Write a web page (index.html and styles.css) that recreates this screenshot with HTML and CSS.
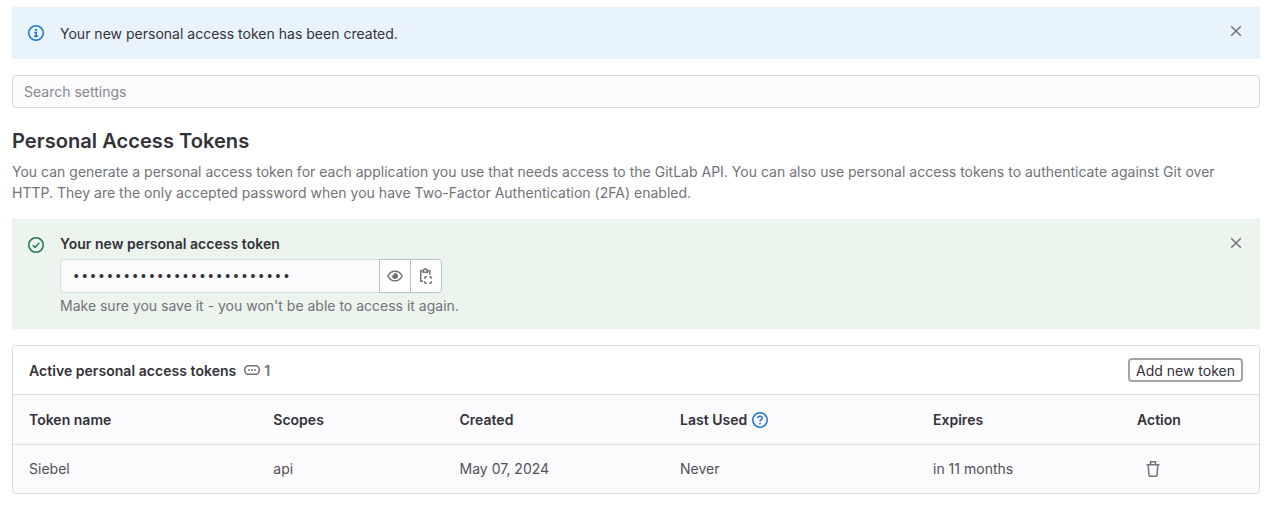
FILE: index.html
```html
<!DOCTYPE html>
<html lang="en">
<head>
<meta charset="utf-8">
<title>Personal Access Tokens</title>
<link rel="stylesheet" href="styles.css">
</head>
<body>
<main class="page">
  <div class="alert alert-info">
    <svg class="icon alert-icon" viewBox="0 0 16 16"><circle cx="8" cy="8" r="7.25"/><path d="M6.2 7.5H8.2V11M6 11.25H10"/><circle class="solid" cx="8" cy="4.9" r="1.1"/></svg>
    <p class="alert-text">Your new personal access token has been created.</p>
    <svg class="icon close" viewBox="0 0 16 16"><path d="M3.2 3.2l9.6 9.6M12.8 3.2l-9.6 9.6"/></svg>
  </div>

  <input class="search" type="text" placeholder="Search settings">

  <h1 class="title">Personal Access Tokens</h1>
  <p class="description">You can generate a personal access token for each application you use that needs access to the GitLab API. You can also use personal access tokens to authenticate against Git over HTTP. They are the only accepted password when you have Two-Factor Authentication (2FA) enabled.</p>

  <div class="alert alert-success">
    <svg class="icon alert-icon" viewBox="0 0 16 16"><circle cx="8" cy="8" r="7.25"/><path d="M4.8 8.3l2.2 2.1 4.2-4.4"/></svg>
    <div class="alert-body">
      <label class="token-label">Your new personal access token</label>
      <div class="token-group">
        <div class="token-value">••••••••••••••••••••••••••</div>
        <button class="token-button" aria-label="Reveal"><svg class="icon" viewBox="0 0 16 16"><path d="M.8 8C2.3 5 4.9 3.15 8 3.15S13.7 5 15.2 8C13.7 11 11.1 12.85 8 12.85S2.300 11 .8 8z"/><path class="solid" d="M8 5a3 3 0 1 1-3 3c0-.2 0-.4.1-.6Q7.3 7.4 7.4 5.1z"/></svg></button>
        <button class="token-button" aria-label="Copy"><svg class="icon" viewBox="0 0 16 16"><path d="M4.5 2.75H2.75v10.5H5M10 2.75h1.75V6.500"/><path d="M5.25 4.25V2L7.250.8l2 1.200v2.250z"/><path d="M6.750 10.800V9.750a1 1 0 0 1 1-1h1.050M11.200 8.750h1.050a1 1 0 0 1 1 1v1.050M13.250 13.200v1.050a1 1 0 0 1-1 1h-1.050M8.800 15.250H7.750a1 1 0 0 1-1-1V13.200"/></svg></button>
      </div>
      <p class="hint">Make sure you save it - you won't be able to access it again.</p>
    </div>
    <svg class="icon close" viewBox="0 0 16 16"><path d="M3.2 3.2l9.6 9.6M12.8 3.2l-9.6 9.6"/></svg>
  </div>

  <section class="card">
    <header class="card-header">
      <h2 class="card-title">Active personal access tokens</h2>
      <span class="count"><svg class="icon" viewBox="0 0 16 16"><rect x=".75" y="2.75" width="14.5" height="8.5" rx="3.75"/><g class="solid"><circle cx="5" cy="7" r=".95"/><circle cx="8" cy="7" r=".95"/><circle cx="11" cy="7" r=".95"/></g></svg>1</span>
      <button class="add">Add new token</button>
    </header>
    <div class="row head">
      <span>Token name</span><span>Scopes</span><span>Created</span>
      <span class="with-help">Last Used <svg class="icon help" viewBox="0 0 16 16"><circle cx="8" cy="8" r="7.25"/><path d="M5.8 6.3C5.9 5 6.8 4.3 8 4.3c1.3 0 2.2.8 2.2 1.9C10.2 7.7 8 7.7 8 9.4"/><circle class="solid" cx="8" cy="11.6" r=".95"/></svg></span>
      <span>Expires</span><span>Action</span>
    </div>
    <div class="row data">
      <span>Siebel</span><span>api</span><span>May 07, 2024</span><span>Never</span><span>in 11 months</span>
      <span class="action"><svg class="icon" viewBox="0 0 16 16"><path d="M1.5 3.75h13M5.5 3.5V.75h5V3.5M3.25 4l.7 10.1q.1 1.15 1.2 1.15h5.7q1.1 0 1.2-1.15L12.75 4"/></svg></span>
    </div>
  </section>
</main>
</body>
</html>
```
FILE: styles.css
```css
* { box-sizing: border-box; }
body {
  margin: 0;
  background: #fff;
  color: #333238;
  font: 14px/20px Inter, "Noto Sans", sans-serif;
  letter-spacing: 0.01px;
}
h1, h2, p { margin: 0; }
button { font: inherit; color: inherit; }
.page { padding: 7px 12px 0; }

.icon {
  display: block;
  flex: none;
  width: 16px;
  height: 16px;
  fill: none;
  stroke: currentColor;
  stroke-width: 1.5;
}
.icon .solid { fill: currentColor; stroke: none; }

.alert { display: flex; align-items: flex-start; padding: 16px; }
.alert-icon { margin: 2px 16px 0 0; }
.alert-info { height: 52px; background: #e9f3fc; }
.alert-info .alert-icon { color: #1f75cb; }
.alert-text { padding-top: 1px; }
.close { margin-left: auto; color: #737278; }
.alert-success { height: 110px; background: #ecf4ee; }
.alert-success .alert-icon { color: #217645; }

.search {
  display: block;
  width: 100%;
  height: 33px;
  margin-top: 16px;
  padding: 0 11px;
  border: 1px solid #dcdcde;
  border-radius: 4px;
  background: #fbfafd;
  font: inherit;
}
.search::placeholder { color: #89888d; opacity: 1; }

.title { margin-top: 19px; font-size: 20.1px; line-height: 28px; font-weight: 600; }
.description { margin: 6px 0 16px; padding-right: 32px; line-height: 21px; color: #737278; }

.token-label { display: block; height: 24px; line-height: 18px; font-weight: 600; letter-spacing: 0.04px; }
.token-group { display: flex; width: 382px; height: 34px; }
.token-value {
  flex: 1;
  padding: 0 11px;
  border: 1px solid #dcdcde;
  border-right: 0;
  border-radius: 4px 0 0 4px;
  background: #fbfafd;
  font: 14px/34px "Liberation Mono", monospace;
}
.token-button {
  display: flex;
  align-items: center;
  justify-content: center;
  width: 32px;
  padding: 0;
  border: 1px solid #bfbfc3;
  background: #fff;
  color: #737278;
}
.token-button + .token-button { margin-left: -1px; border-radius: 0 4px 4px 0; }
.hint { padding-top: 3px; color: #737278; letter-spacing: 0; }

.card { margin-top: 16px; border: 1px solid #dcdcde; border-radius: 4px; overflow: hidden; background: #fbfafd; }
.card-header { display: flex; align-items: center; height: 48px; padding: 0 16px; background: #fff; }
.card-title { padding-top: 2px; font-size: 14px; line-height: 20px; font-weight: 600; letter-spacing: 0.04px; }
.count { display: flex; align-items: center; gap: 4px; margin-left: 8px; padding-top: 2px; color: #737278; font-weight: 600; }
.add {
  width: 115px;
  height: 24px;
  margin-left: auto;
  padding: 1px 0 0;
  border: 2px solid #a4a3a8;
  border-radius: 4px;
  background: #fff;
  line-height: 19px;
  white-space: nowrap;
}
.row {
  display: grid;
  grid-template-columns: 244.3px 186.2px 220.5px 253px 204px auto;
  align-items: center;
  padding: 0 16px;
  border-top: 1px solid #dcdcde;
}
.head { height: 50px; font-weight: 600; }
.data { height: 49px; color: #535158; }
.with-help { display: flex; align-items: center; gap: 5px; }
.help { color: #1f75cb; }
.action { padding-left: 8px; color: #737278; }
```
